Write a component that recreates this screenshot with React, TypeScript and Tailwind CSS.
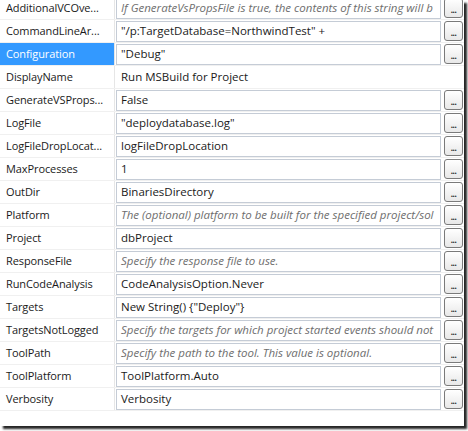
import React from "react";

interface PropRow {
  name: string;
  value: string;
  hint?: boolean; // grey italic help text
  selected?: boolean;
  readOnly?: boolean;
}

const rows: PropRow[] = [
  { name: "AdditionalVCOve...", value: "If GenerateVsPropsFile is true, the contents of this string will b", hint: true },
  { name: "CommandLineAr...", value: "\"/p:TargetDatabase=NorthwindTest\" +" },
  { name: "Configuration", value: "\"Debug\"", selected: true },
  { name: "DisplayName", value: "Run MSBuild for Project", readOnly: true },
  { name: "GenerateVSProps...", value: "False" },
  { name: "LogFile", value: "\"deploydatabase.log\"" },
  { name: "LogFileDropLocat...", value: "logFileDropLocation" },
  { name: "MaxProcesses", value: "1" },
  { name: "OutDir", value: "BinariesDirectory" },
  { name: "Platform", value: "The (optional) platform to be built for the specified project/sol", hint: true },
  { name: "Project", value: "dbProject" },
  { name: "ResponseFile", value: "Specify the response file to use.", hint: true },
  { name: "RunCodeAnalysis", value: "CodeAnalysisOption.Never" },
  { name: "Targets", value: "New String() {\"Deploy\"}" },
  { name: "TargetsNotLogged", value: "Specify the targets for which project started events should not", hint: true },
  { name: "ToolPath", value: "Specify the path to the tool. This value is optional.", hint: true },
  { name: "ToolPlatform", value: "ToolPlatform.Auto" },
  { name: "Verbosity", value: "Verbosity" },
];

const font = { fontFamily: "'Open Sans', 'Noto Sans', sans-serif" };

const EllipsisButton = () => (
  <div className="w-[19px] h-[20px] shrink-0 rounded-[3px] border border-[#7a7a7a] bg-gradient-to-b from-white to-[#e8e8e8] flex items-end justify-center pb-[3px]">
    <span className="text-[8px] leading-[8px] text-[#222] font-bold tracking-[-0.5px]">...</span>
  </div>
);

export default function App() {
  return (
    <div className="w-[468px] h-[431px] bg-white overflow-hidden" style={font}>
      <div className="w-[464px] h-[426px] bg-white overflow-hidden shadow-[3px_3px_2px_rgba(0,0,0,0.85)]">
        <div className="-mt-[3px]">
          {rows.map((r) => (
            <div key={r.name} className="flex h-[23px] border-b border-[#f0f0f0]">
              <div
                className={
                  "w-[115px] shrink-0 pl-[6px] flex items-center whitespace-nowrap overflow-hidden text-[11px] tracking-[-0.1px] border-r border-[#e6e6e6] " +
                  (r.selected ? "bg-[#3399ff] text-white" : "text-[#1a1a1a]")
                }
              >
                {r.name}
              </div>
              <div className="flex-1 flex items-center pl-[1px] pr-[1px] gap-[3px] min-w-0">
                {r.readOnly ? (
                  <div className="flex-1 pl-[5px] text-[11.5px] text-[#1a1a1a] whitespace-nowrap overflow-hidden">
                    {r.value}
                  </div>
                ) : (
                  <>
                    <div
                      className={
                        "flex-1 h-[21px] min-w-0 border border-[#c5ccd6] bg-white pl-[4px] flex items-center whitespace-nowrap overflow-hidden text-[11.5px] " +
                        (r.hint ? "italic text-[#6e6e6e]" : "text-[#1a1a1a]")
                      }
                    >
                      {r.value}
                    </div>
                    <EllipsisButton />
                  </>
                )}
              </div>
            </div>
          ))}
        </div>
      </div>
    </div>
  );
}
